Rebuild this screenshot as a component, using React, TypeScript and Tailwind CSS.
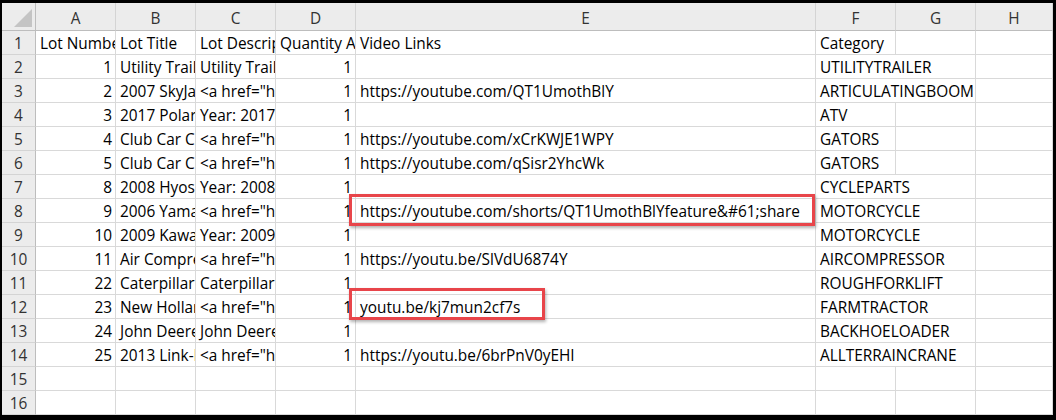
import React from 'react';

type Row = {
  a: string;
  b: string;
  c: string;
  d: string;
  e: string;
  f: string;
};

const rows: Row[] = [
  { a: 'Lot Number', b: 'Lot Title', c: 'Lot Description', d: 'Quantity Available', e: 'Video Links', f: 'Category' },
  { a: '1', b: 'Utility Trailer', c: 'Utility Trailer', d: '1', e: '', f: 'UTILITYTRAILER' },
  { a: '2', b: '2007 SkyJack', c: '<a href="https', d: '1', e: 'https://youtube.com/QT1UmothBlY', f: 'ARTICULATINGBOOM' },
  { a: '3', b: '2017 Polaris', c: 'Year: 2017', d: '1', e: '', f: 'ATV' },
  { a: '4', b: 'Club Car Carryall', c: '<a href="https', d: '1', e: 'https://youtube.com/xCrKWJE1WPY', f: 'GATORS' },
  { a: '5', b: 'Club Car Carryall', c: '<a href="https', d: '1', e: 'https://youtube.com/qSisr2YhcWk', f: 'GATORS' },
  { a: '8', b: '2008 Hyosung', c: 'Year: 2008', d: '1', e: '', f: 'CYCLEPARTS' },
  { a: '9', b: '2006 Yamaha', c: '<a href="https', d: '1', e: 'https://youtube.com/shorts/QT1UmothBlYfeature&#61;share', f: 'MOTORCYCLE' },
  { a: '10', b: '2009 Kawasaki', c: 'Year: 2009', d: '1', e: '', f: 'MOTORCYCLE' },
  { a: '11', b: 'Air Compressor', c: '<a href="https', d: '1', e: 'https://youtu.be/SlVdU6874Y', f: 'AIRCOMPRESSOR' },
  { a: '22', b: 'Caterpillar', c: 'Caterpillar', d: '1', e: '', f: 'ROUGHFORKLIFT' },
  { a: '23', b: 'New Holland', c: '<a href="https', d: '1', e: 'youtu.be/kj7mun2cf7s', f: 'FARMTRACTOR' },
  { a: '24', b: 'John Deere', c: 'John Deere', d: '1', e: '', f: 'BACKHOELOADER' },
  { a: '25', b: '2013 Link-Belt', c: '<a href="https', d: '1', e: 'https://youtu.be/6brPnV0yEHI', f: 'ALLTERRAINCRANE' },
  { a: '', b: '', c: '', d: '', e: '', f: '' },
  { a: '', b: '', c: '', d: '', e: '', f: '' },
];

const cols = ['A', 'B', 'C', 'D', 'E', 'F', 'G', 'H'];

const cell = 'h-[24px] border-r border-b border-[#d9d9d9] overflow-hidden whitespace-nowrap flex items-center pt-[3px] leading-none';

export default function App() {
  return (
    <div
      className="w-[1056px] h-[420px] bg-black pt-[3px] pl-[2px] pr-[3px] pb-[5px]"
      style={{ fontFamily: '"Open Sans", "Liberation Sans", Arial, sans-serif' }}
    >
      <div className="relative w-full h-full bg-white overflow-hidden text-[15.4px] text-black">
        <div className="grid grid-cols-[34px_80px_80px_80px_80px_460px_80px_80px_1fr]">
          {/* corner */}
          <div className="relative h-[28px] bg-[#ececec] border-r border-b border-[#bdbdbd]">
            <div className="absolute right-[3px] bottom-[3px] w-0 h-0 border-l-[18px] border-l-transparent border-b-[18px] border-b-[#c4c4c4]" />
          </div>
          {cols.map((c) => (
            <div
              key={c}
              className="h-[28px] bg-[#ececec] border-r border-b border-r-[#d4d4d4] border-b-[#bdbdbd] flex items-center justify-center text-[#333] pt-[5px] leading-none"
            >
              {c}
            </div>
          ))}

          {rows.map((r, i) => {
            const n = i + 1;
            const header = n === 1;
            const wideCat = r.f.length > 9;
            return (
              <React.Fragment key={n}>
                <div className="h-[24px] bg-[#ececec] border-r border-b border-r-[#bdbdbd] border-b-[#d4d4d4] flex items-center justify-center text-[#333] pt-[3px] leading-none">
                  {n}
                </div>
                <div className={`${cell} ${header ? 'pl-[4px]' : 'justify-end pr-[3px]'}`}>{r.a}</div>
                <div className={`${cell} pl-[4px]`}>{r.b}</div>
                <div className={`${cell} pl-[4px]`}>{r.c}</div>
                <div className={`${cell} ${header ? 'pl-[4px]' : 'justify-end pr-[3px]'}`}>{r.d}</div>
                <div className={`${cell} pl-[4px]`}>{r.e}</div>
                {wideCat ? (
                  <div className={`${cell} col-span-2 pl-[4px]`}>{r.f}</div>
                ) : (
                  <>
                    <div className={`${cell} pl-[4px]`}>{r.f}</div>
                    <div className={cell} />
                  </>
                )}
                <div className={cell} />
              </React.Fragment>
            );
          })}
        </div>

        {/* highlight boxes */}
        <div className="absolute left-[347px] top-[191px] w-[466px] h-[32px] border-[3px] border-[#e8454a] shadow-[1px_2px_3px_rgba(0,0,0,0.3)]" />
        <div className="absolute left-[347px] top-[285px] w-[196px] h-[32px] border-[3px] border-[#e8454a] shadow-[1px_2px_3px_rgba(0,0,0,0.3)]" />
      </div>
    </div>
  );
}
